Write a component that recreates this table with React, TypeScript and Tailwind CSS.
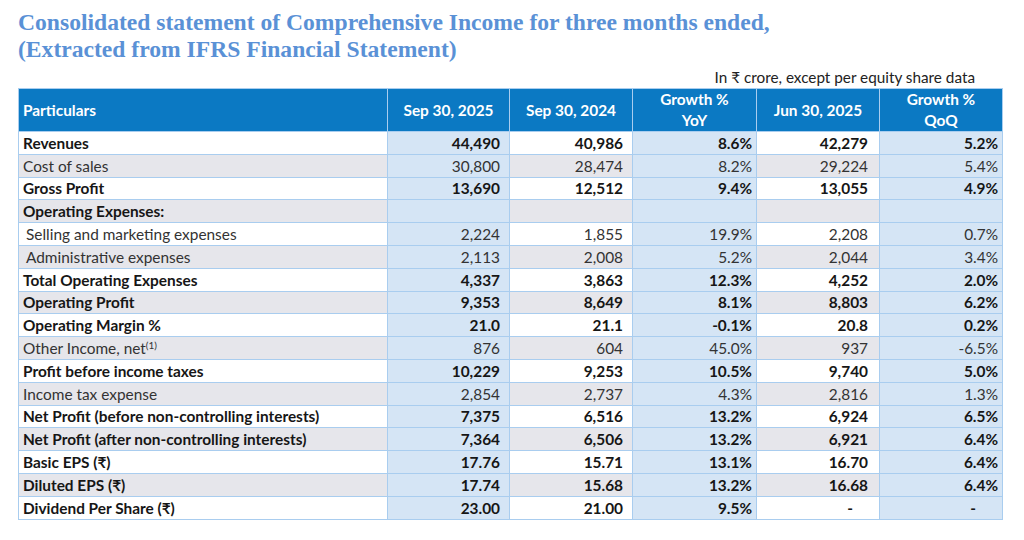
type Row = {
  label: string;
  vals: string[];
  bold?: boolean;
  indent?: boolean;
  sup?: string;
};

const rows: Row[] = [
  { label: "Revenues", vals: ["44,490", "40,986", "8.6%", "42,279", "5.2%"], bold: true },
  { label: "Cost of sales", vals: ["30,800", "28,474", "8.2%", "29,224", "5.4%"] },
  { label: "Gross Profit", vals: ["13,690", "12,512", "9.4%", "13,055", "4.9%"], bold: true },
  { label: "Operating Expenses:", vals: ["", "", "", "", ""], bold: true },
  { label: "Selling and marketing expenses", vals: ["2,224", "1,855", "19.9%", "2,208", "0.7%"], indent: true },
  { label: "Administrative expenses", vals: ["2,113", "2,008", "5.2%", "2,044", "3.4%"], indent: true },
  { label: "Total Operating Expenses", vals: ["4,337", "3,863", "12.3%", "4,252", "2.0%"], bold: true },
  { label: "Operating Profit", vals: ["9,353", "8,649", "8.1%", "8,803", "6.2%"], bold: true },
  { label: "Operating Margin %", vals: ["21.0", "21.1", "-0.1%", "20.8", "0.2%"], bold: true },
  { label: "Other Income, net", sup: "(1)", vals: ["876", "604", "45.0%", "937", "-6.5%"] },
  { label: "Profit before income taxes", vals: ["10,229", "9,253", "10.5%", "9,740", "5.0%"], bold: true },
  { label: "Income tax expense", vals: ["2,854", "2,737", "4.3%", "2,816", "1.3%"] },
  { label: "Net Profit (before non-controlling interests)", vals: ["7,375", "6,516", "13.2%", "6,924", "6.5%"], bold: true },
  { label: "Net Profit (after non-controlling interests)", vals: ["7,364", "6,506", "13.2%", "6,921", "6.4%"], bold: true },
  { label: "Basic EPS (₹)", vals: ["17.76", "15.71", "13.1%", "16.70", "6.4%"], bold: true },
  { label: "Diluted EPS (₹)", vals: ["17.74", "15.68", "13.2%", "16.68", "6.4%"], bold: true },
  { label: "Dividend Per Share (₹)", vals: ["23.00", "21.00", "9.5%", "-", "-"], bold: true },
];

// columns 0, 2, 4 (Sep 30 2025, Growth YoY, Growth QoQ) are always light blue
const blueCol = [true, false, true, false, true];
const padCol = ["pr-[9px]", "pr-[9px]", "pr-[4px]", "pr-[11px]", "pr-[4px]"];

export default function App() {
  return (
    <div className="w-[1024px] h-[540px] bg-white overflow-hidden font-['Lato',sans-serif] text-[#161616]">
      <div className="pl-[18px] pt-[9px] font-['Liberation_Serif',serif] font-bold text-[23.6px] leading-[27px] text-[#5a91d6]">
        <div>Consolidated statement of Comprehensive Income for three months ended,</div>
        <div>(Extracted from IFRS Financial Statement)</div>
      </div>
      <div className="flex justify-end pr-[49px] pt-[5px] text-[15.3px] leading-[18px] text-[#222]">
        In ₹ crore, except per equity share data
      </div>
      <table className="ml-[18px] mt-[2px] border-collapse table-fixed w-[984px] text-[15.4px] leading-[16px]">
        <colgroup>
          <col className="w-[369px]" />
          <col className="w-[122px]" />
          <col className="w-[123px]" />
          <col className="w-[124px]" />
          <col className="w-[123px]" />
          <col className="w-[123px]" />
        </colgroup>
        <thead>
          <tr className="h-[43px] bg-[#0b79c3] text-white font-bold">
            <th className="border border-[#a9cdef] text-left pl-[4px] font-bold">Particulars</th>
            <th className="border border-[#a9cdef] text-center font-bold">Sep 30, 2025</th>
            <th className="border border-[#a9cdef] text-center font-bold">Sep 30, 2024</th>
            <th className="border border-[#a9cdef] text-center font-bold leading-[21px]">
              Growth %<br />YoY
            </th>
            <th className="border border-[#a9cdef] text-center font-bold">Jun 30, 2025</th>
            <th className="border border-[#a9cdef] text-center font-bold leading-[21px]">
              Growth %<br />QoQ
            </th>
          </tr>
        </thead>
        <tbody>
          {rows.map((r, i) => {
            const rowBg = i % 2 === 0 ? "bg-white" : "bg-[#e6e6eb]";
            return (
              <tr key={r.label} className={`h-[22.8px] ${r.bold ? "font-bold" : "font-normal text-[#333]"}`}>
                <td className={`border border-[#a9cdef] ${rowBg} ${r.indent ? "pl-[7px]" : "pl-[4px]"} whitespace-nowrap`}>
                  {r.label}
                  {r.sup && <sup className="text-[10px] font-normal">{r.sup}</sup>}
                </td>
                {r.vals.map((v, j) => (
                  <td
                    key={j}
                    className={`border border-[#a9cdef] text-right whitespace-nowrap ${
                      blueCol[j] ? "bg-[#d5e5f5]" : rowBg
                    } ${v === "-" ? "pr-[26px]" : padCol[j]}`}
                  >
                    {v}
                  </td>
                ))}
              </tr>
            );
          })}
        </tbody>
      </table>
    </div>
  );
}
